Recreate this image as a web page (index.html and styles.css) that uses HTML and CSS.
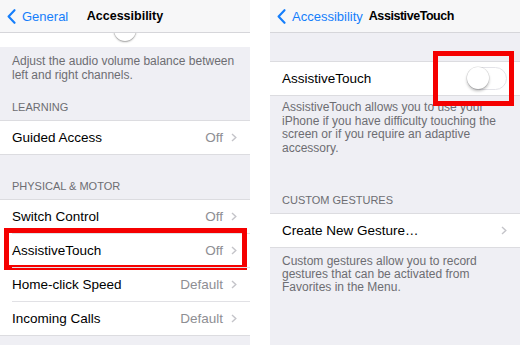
FILE: index.html
```html
<!DOCTYPE html>
<html>
<head>
<meta charset="utf-8">
<link rel="stylesheet" href="styles.css">
</head>
<body>
<div class="page">
  <section class="screen">
    <header class="nav nav-centered">
      <div class="back">
        <svg class="back-chev" width="9" height="15" viewBox="0 0 9 15"><path d="M7.5 1.2 L1.6 7.5 L7.5 13.8" fill="none" stroke="#157efb" stroke-width="2.1" stroke-linecap="round" stroke-linejoin="round"/></svg>
        <span>General</span>
      </div>
      <div class="title">Accessibility</div>
    </header>
    <div class="slider-row"><div class="slider-thumb"></div></div>
    <div class="section">
      <p class="desc desc-first">Adjust the audio volume balance between<br>left and right channels.</p>
      <div class="header header-learning">LEARNING</div>
    </div>
    <div class="group">
      <div class="row"><span class="label">Guided Access</span><span class="value">Off</span><svg class="chev" width="6" height="9" viewBox="0 0 6 9"><path d="M1 1 L4.8 4.5 L1 8" fill="none" stroke="#c4c4c9" stroke-width="1.4"/></svg></div>
    </div>
    <div class="section">
      <div class="header header-physical">PHYSICAL &amp; MOTOR</div>
    </div>
    <div class="group">
      <div class="row"><span class="label">Switch Control</span><span class="value">Off</span><svg class="chev" width="6" height="9" viewBox="0 0 6 9"><path d="M1 1 L4.8 4.5 L1 8" fill="none" stroke="#c4c4c9" stroke-width="1.4"/></svg></div>
      <div class="row row-marked"><span class="label">AssistiveTouch</span><span class="value">Off</span><svg class="chev" width="6" height="9" viewBox="0 0 6 9"><path d="M1 1 L4.8 4.5 L1 8" fill="none" stroke="#c4c4c9" stroke-width="1.4"/></svg><div class="mark mark-row"></div></div>
      <div class="row"><span class="label">Home-click Speed</span><span class="value">Default</span><svg class="chev" width="6" height="9" viewBox="0 0 6 9"><path d="M1 1 L4.8 4.5 L1 8" fill="none" stroke="#c4c4c9" stroke-width="1.4"/></svg></div>
      <div class="row"><span class="label">Incoming Calls</span><span class="value">Default</span><svg class="chev" width="6" height="9" viewBox="0 0 6 9"><path d="M1 1 L4.8 4.5 L1 8" fill="none" stroke="#c4c4c9" stroke-width="1.4"/></svg></div>
    </div>
    <div class="section section-fill"></div>
  </section>

  <div class="divider"></div>

  <section class="screen">
    <header class="nav">
      <div class="back back-right">
        <svg class="back-chev" width="9" height="15" viewBox="0 0 9 15"><path d="M7.5 1.2 L1.6 7.5 L7.5 13.8" fill="none" stroke="#157efb" stroke-width="2.1" stroke-linecap="round" stroke-linejoin="round"/></svg>
        <span>Accessibility</span>
      </div>
      <div class="title title-tight">AssistiveTouch</div>
    </header>
    <div class="section section-top"></div>
    <div class="group">
      <div class="row"><span class="label">AssistiveTouch</span>
        <div class="toggle"><div class="toggle-thumb"></div></div>
        <div class="mark mark-toggle"></div>
      </div>
    </div>
    <div class="section">
      <p class="desc desc-footer">AssistiveTouch allows you to use your<br>iPhone if you have difficulty touching the<br>screen or if you require an adaptive<br>accessory.</p>
      <div class="header header-custom">CUSTOM GESTURES</div>
    </div>
    <div class="group">
      <div class="row"><span class="label">Create New Gesture…</span><svg class="chev" width="6" height="9" viewBox="0 0 6 9"><path d="M1 1 L4.8 4.5 L1 8" fill="none" stroke="#c4c4c9" stroke-width="1.4"/></svg></div>
    </div>
    <div class="section section-fill">
      <p class="desc desc-footer2">Custom gestures allow you to record<br>gestures that can be activated from<br>Favorites in the Menu.</p>
    </div>
  </section>
</div>
</body>
</html>
```

FILE: styles.css
```css
* { box-sizing: border-box; }
html, body { margin: 0; padding: 0; background: #fff; }
body {
  font-family: "Liberation Sans", Arial, sans-serif;
  color: #000;
}
.page {
  display: flex;
  width: 520px;
  height: 345px;
  overflow: hidden;
}
.screen {
  width: 250px;
  display: flex;
  flex-direction: column;
  background: #efeff4;
}
.divider {
  width: 20px;
  background: #fff;
}
.nav {
  height: 33px;
  flex: none;
  background: #f7f7f8;
  border-bottom: 1px solid #d6d6da;
  display: flex;
  align-items: center;
  position: relative;
  padding-left: 7px;
}
.back {
  display: flex;
  align-items: center;
  gap: 6px;
  color: #157efb;
  font-size: 13px;
}
.back-right { gap: 6px; padding-left: 0; }
.back-chev { display: block; }
.title {
  font-weight: bold;
  font-size: 12.5px;
}
.nav-centered .title {
  position: absolute;
  left: 0;
  right: 0;
  text-align: center;
}
.title-tight {
  letter-spacing: -0.45px;
  margin-left: 6px;
}
.slider-row {
  height: 14px;
  flex: none;
  background: #fff;
  overflow: hidden;
  display: flex;
  justify-content: center;
}
.slider-thumb {
  width: 22px;
  height: 22px;
  border-radius: 50%;
  background: #fff;
  margin-top: -14px;
  box-shadow: 0 1px 2px rgba(0,0,0,0.35), 0 0 0 0.5px rgba(0,0,0,0.12);
}
.section { flex: none; }
.section-top { height: 28px; }
.section-fill { flex: 1; }
.desc {
  margin: 0;
  padding: 0 12px;
  font-size: 12px;
  color: #6d6d72;
}
.desc-first { padding-top: 7px; line-height: 14px; }
.desc-footer { padding-top: 5px; line-height: 13.5px; }
.desc-footer2 { padding-top: 7px; line-height: 13px; }
.header {
  padding: 0 12px 6px;
  font-size: 11px;
  line-height: 13px;
  color: #6d6d72;
}
.header-learning { padding-top: 19px; }
.header-physical { padding-top: 25px; }
.header-custom { padding-top: 39px; }
.group {
  flex: none;
  background: #fff;
  border-top: 1px solid #dcdce0;
  border-bottom: 1px solid #dcdce0;
  padding-left: 12px;
}
.row {
  height: 33px;
  display: flex;
  align-items: center;
  padding-right: 13px;
  font-size: 13.5px;
  position: relative;
}
.row + .row { border-top: 1px solid #e1e1e5; height: 34px; }
.label { flex: 1; }
.value { color: #8e8e93; margin-right: 8px; }
.chev { display: block; }
.toggle {
  width: 40px;
  height: 23px;
  border-radius: 12px;
  border: 1.5px solid #e3e3e8;
  background: #fff;
  position: relative;
}
.toggle-thumb {
  width: 22px;
  height: 22px;
  border-radius: 50%;
  background: #fff;
  margin: -1px 0 0 -1px;
  box-shadow: 0 2px 3px rgba(0,0,0,0.28), 0 0 0 0.5px rgba(0,0,0,0.12);
}
.mark {
  position: absolute;
  border: 5px solid #f50000;
  pointer-events: none;
}
.mark-row {
  left: -8px;
  right: 3px;
  top: -6px;
  bottom: -3px;
}
.mark-toggle {
  left: 151px;
  width: 81px;
  top: -11px;
  height: 55px;
}
```
